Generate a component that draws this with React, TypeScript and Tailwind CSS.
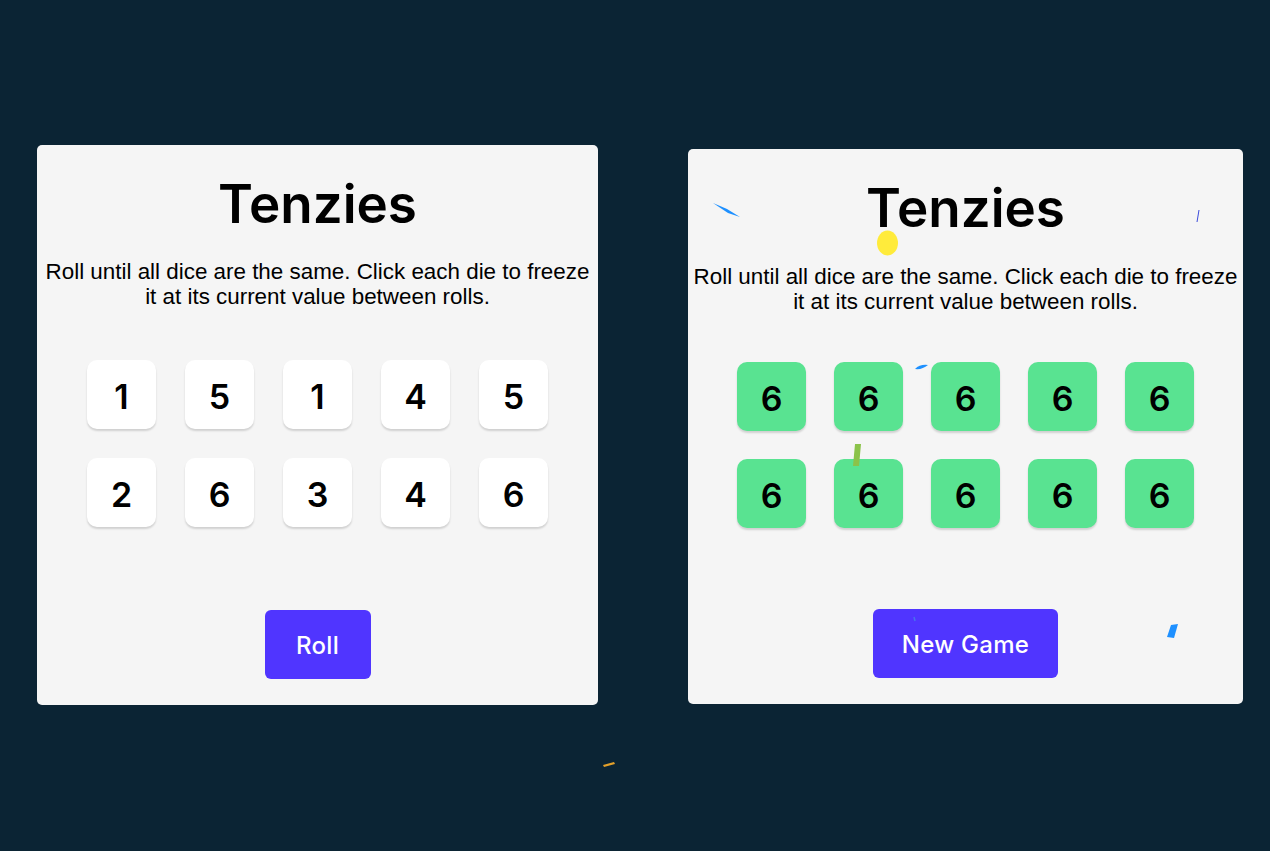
import React from "react";

const leftDice = [1, 5, 1, 4, 5, 2, 6, 3, 4, 6];
const rightDice = [6, 6, 6, 6, 6, 6, 6, 6, 6, 6];

const inter = { fontFamily: "Inter, 'Noto Sans', sans-serif" };

function Die({ value, held }: { value: number; held: boolean }) {
  return (
    <div
      className={`flex h-[69px] w-[69px] items-center justify-center rounded-[10px] pt-[4px] text-[34px] font-semibold text-black shadow-[0_2px_2px_rgba(0,0,0,0.15)] ${
        held ? "bg-[#59e391]" : "bg-white"
      }`}
      style={inter}
    >
      {value}
    </div>
  );
}

type CardProps = {
  dice: number[];
  held: boolean;
  button: string;
  className: string;
  buttonWidth: string;
  gridClass: string;
  textMt: string;
  buttonMt: string;
};

function Card({ dice, held, button, className, buttonWidth, gridClass, textMt, buttonMt }: CardProps) {
  return (
    <div className={`relative flex flex-col items-center rounded-[5px] bg-[#f5f5f5] ${className}`}>
      <h1 className="mt-[28px] text-[53px] font-semibold leading-[62px] text-black" style={inter}>
        Tenzies
      </h1>
      <p
        className={`${textMt} text-center text-[22.4px] leading-[25px] text-black`}
        style={{ fontFamily: "'Liberation Sans', Arial, sans-serif" }}
      >
        Roll until all dice are the same. Click each die to freeze
        <br />
        it at its current value between rolls.
      </p>
      <div className={`grid grid-cols-5 ${gridClass}`}>
        {dice.map((d, i) => (
          <Die key={i} value={d} held={held} />
        ))}
      </div>
      <button
        className={`${buttonMt} flex h-[69px] items-center justify-center rounded-[6px] bg-[#5035ff] pt-[3px] text-[24px] font-medium tracking-[0.3px] text-white ${buttonWidth}`}
        style={inter}
      >
        {button}
      </button>
    </div>
  );
}

export default function App() {
  return (
    <div className="relative h-[851px] w-[1270px] overflow-hidden bg-[#0b2434]">
      <div className="flex items-start gap-[90px] pl-[37px] pt-[145px]">
        <Card
          dice={leftDice}
          held={false}
          button="Roll"
          className="h-[560px] w-[561px]"
          buttonWidth="w-[106px]"
          gridClass="mt-[51px] gap-x-[29px] gap-y-[29px]"
          textMt="mt-[24px]"
          buttonMt="mt-[83px]"
        />
        <Card
          dice={rightDice}
          held={true}
          button="New Game"
          className="mt-[4px] h-[555px] w-[555px]"
          buttonWidth="w-[185px]"
          gridClass="mt-[48px] gap-x-[28px] gap-y-[28px]"
          textMt="mt-[25px]"
          buttonMt="mt-[81px]"
        />
      </div>
      {/* confetti */}
      <svg className="pointer-events-none absolute left-0 top-0" width="1270" height="851">
        <path d="M713 203 L727 209 L740 217 L728 213 Z" fill="#1e90ff" />
        <path d="M1199 210 L1197 222" stroke="#3b4bdb" strokeWidth="1" />
        <ellipse cx="887.5" cy="243" rx="10.5" ry="12.5" fill="#ffeb3b" />
        <path d="M915 369 Q920 364 928 365 Q922 370 915 369 Z" fill="#1e90ff" />
        <path d="M855 444 L861 444 L859 466 L853 466 Z" fill="#8bc34a" />
        <path d="M914 617 L915 621" stroke="#4a6cf0" strokeWidth="1.5" />
        <path d="M1171 625 L1178 624 L1174 638 L1167 637 Z" fill="#1e90ff" />
        <path d="M603 765 L614 762 L615 764 L604 767 Z" fill="#e3a02a" />
      </svg>
    </div>
  );
}
